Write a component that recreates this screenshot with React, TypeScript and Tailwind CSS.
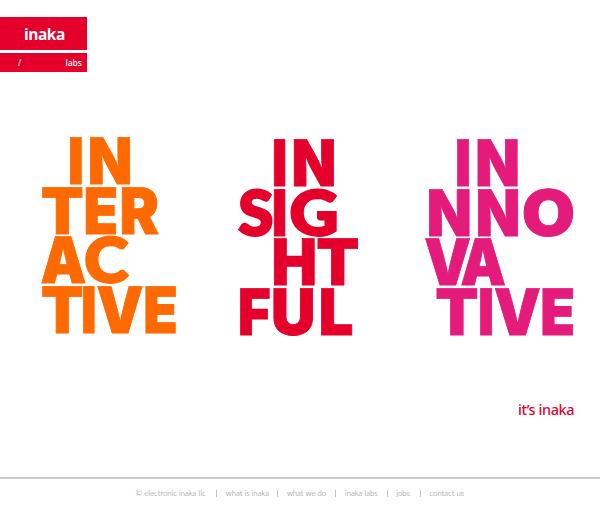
type Glyph = { char: string; left: number; right: number; base: number };
type Face = { family: string; outline: number };

const CAP_HEIGHT = 47.6;
const STRAIGHT: Face = { family: "Inter, sans-serif", outline: 0.9 };
const ROUND: Face = { family: "Lato, sans-serif", outline: 2.8 };

const faceOf = (char: string) => ("SCG".includes(char) ? ROUND : STRAIGHT);

const probe = document.createElement("canvas").getContext("2d")!;

// Scales one letter so that its ink, outline included, fills the given span and the shared cap height.
function fit({ char, left, right, base }: Glyph) {
  const { family, outline } = faceOf(char);
  probe.font = `900 200px ${family}`;
  const ink = probe.measureText(char);
  const cap = probe.measureText("H").actualBoundingBoxAscent;
  const sx = (right - left - outline) / (ink.actualBoundingBoxRight + ink.actualBoundingBoxLeft);
  const sy = (CAP_HEIGHT - outline) / cap;
  const x = left + outline / 2 + ink.actualBoundingBoxLeft * sx;
  return {
    transform: `translate(${x} ${base - outline / 2}) scale(${sx} ${sy})`,
    strokeWidth: outline / sy,
  };
}

const row = (base: number, ...letters: [string, number, number][]): Glyph[] =>
  letters.map(([char, left, right]) => ({ char, left, right, base }));

const interactive = [
  ...row(47.5, ["I", 29.7, 41.7], ["N", 50, 90.3]),
  ...row(97, ["T", 2, 42.4], ["E", 45.5, 76.3], ["R", 81.7, 119]),
  ...row(146.8, ["A", 1.3, 45.7], ["C", 45, 89]),
  ...row(196.6, ["T", 2, 42.2], ["I", 43, 54.7], ["V", 57.3, 102.7], ["E", 105.3, 136]),
];

const insightful = [
  ...row(47.3, ["I", 35.7, 47.4], ["N", 55.7, 96]),
  ...row(97, ["S", 0, 34.6], ["I", 35.7, 47.4], ["G", 52.3, 98.7]),
  ...row(146.8, ["H", 35.7, 76.7], ["T", 79.3, 120]),
  ...row(196.7, ["F", 2, 31.7], ["U", 35.3, 75], ["L", 83, 114.3]),
];

const innovative = [
  ...row(47.3, ["I", 33, 45], ["N", 53.3, 93.7]),
  ...row(97, ["N", 5, 45.7], ["N", 54, 94.3], ["O", 99.3, 149.3]),
  ...row(146.8, ["V", 1, 46.3], ["A", 37.3, 81.3]),
  ...row(196.7, ["T", 12.3, 53.3], ["I", 56, 68], ["V", 70.7, 116], ["E", 118.3, 149.3]),
];

function Wordmark({ glyphs, label, className }: { glyphs: Glyph[]; label: string; className: string }) {
  return (
    <svg className={`shrink-0 overflow-visible ${className}`} role="img" aria-label={label}>
      {glyphs.map((g, i) => (
        <text
          key={i}
          {...fit(g)}
          fontFamily={faceOf(g.char).family}
          fontSize={200}
          fontWeight={900}
          fill="currentColor"
          stroke="currentColor"
          strokeLinejoin="miter"
          textRendering="geometricPrecision"
        >
          {g.char}
        </text>
      ))}
    </svg>
  );
}

const links = [
  { text: "© electronic inaka llc", width: "w-[72px]" },
  { text: "what is inaka", width: "w-[43px]" },
  { text: "what we do", width: "w-[40px]" },
  { text: "inaka labs", width: "w-[33px]" },
  { text: "jobs", width: "w-[15px]" },
  { text: "contact us", width: "w-[36px]" },
];

export default function App() {
  return (
    <div className="flex h-[516px] w-[600px] flex-col overflow-hidden bg-white pt-[17px] font-[Lato,'Open_Sans',sans-serif]">
      <header className="w-[87px] text-white">
        <div className="flex h-[33px] items-center bg-[#e4002b] pt-[2px] pl-[24px] font-['Open_Sans',sans-serif] text-[15.5px] font-bold tracking-[-0.5px]">
          inaka
        </div>
        <div className="mt-[3px] flex h-[19px] items-center justify-between bg-[#e4002b] pt-px pr-[5px] pl-[18px] font-['Noto_Sans',sans-serif] text-[8.5px] font-medium">
          <span>/</span>
          <span>labs</span>
        </div>
      </header>
      <main className="flex grow flex-col">
        <div className="mt-[65px] flex pl-[40px]">
          <Wordmark glyphs={interactive} label="interactive" className="h-[200px] w-[138px] text-[#ff6a00]" />
          <Wordmark glyphs={insightful} label="insightful" className="mt-[1.5px] ml-[60px] h-[200px] w-[121px] text-[#e4002b]" />
          <Wordmark glyphs={innovative} label="innovative" className="mt-[1.5px] ml-[65px] h-[200px] w-[150px] text-[#e41b7b]" />
        </div>
        <p className="mt-[60px] pr-[26px] text-right font-['Noto_Sans',sans-serif] text-[14.5px] leading-[20px] font-medium tracking-[-0.45px] text-[#e4002b]">
          it’s inaka
        </p>
      </main>
      <footer className="h-[39px] border-t-2 border-[#c9c9c9] pt-[8px]">
        <nav className="flex items-center pl-[135.5px] text-[7.8px] leading-[12px] font-light whitespace-nowrap text-[#777]">
          {links.map((link, i) => (
            <div key={link.text} className="flex items-center">
              {i > 0 && <span className="mx-[8.6px] h-[7px] w-px bg-[#c4c4c4]" />}
              <a className={link.width}>{link.text}</a>
            </div>
          ))}
        </nav>
      </footer>
    </div>
  );
}
